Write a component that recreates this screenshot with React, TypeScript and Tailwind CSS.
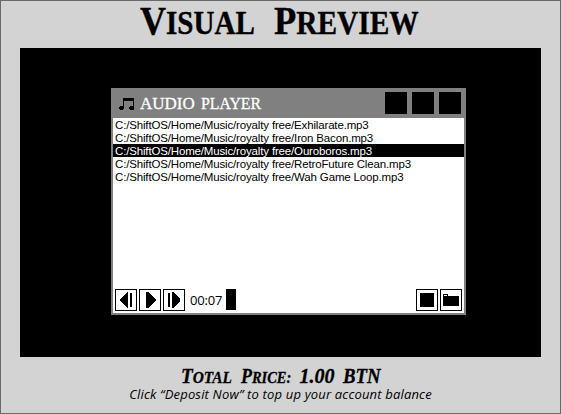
import React from "react";

const TRACKS = ["Exhilarate", "Iron Bacon", "Ouroboros", "RetroFuture Clean", "Wah Game Loop"];

function IconButton({ children }: { children: React.ReactNode }) {
  return (
    <button className="h-[22px] w-[22px] shrink-0 border border-black bg-white">
      <svg viewBox="0 0 20 20" className="block h-5 w-5" shapeRendering="crispEdges">
        {children}
      </svg>
    </button>
  );
}

export default function App() {
  return (
    <main className="flex h-[414px] w-[561px] flex-col items-center border border-[#696969] bg-[#d3d3d3] text-black">
      <h1 className="mr-1 flex h-[47px] w-[278px] shrink-0 items-baseline justify-between whitespace-nowrap font-['Liberation_Serif',serif] text-[33px] leading-[38px] font-bold [-webkit-text-stroke:0.4px_black]">
        <span className="w-[114px] origin-left scale-x-[0.88]"><span className="text-[41px]">V</span>ISUAL</span>
        <span className="w-[144px] origin-left scale-x-[0.89]"><span className="text-[41px]">P</span>REVIEW</span>
      </h1>
      <section className="flex h-[309px] w-[521px] shrink-0 bg-black pt-10 pl-[91px]">
        <div className="flex h-[227px] w-[355px] flex-col border-x-2 border-b-2 border-[#808080] bg-white">
          <header className="flex h-[30px] shrink-0 bg-[#808080] pt-1 pr-[3px] pl-1.5">
            <svg viewBox="0 0 16 14" className="mt-[5px] h-[14px] w-4" shapeRendering="crispEdges">
              <path d="M4 1h11v12h-4v-1h-1v-2h1V9h3V4H5v8H4v1H1v-1H0v-2h1V9h3z" />
            </svg>
            <div className="ml-[5px] flex gap-[6px] font-['Liberation_Serif',serif] text-[17px] leading-[23px] whitespace-nowrap text-white [-webkit-text-stroke:0.3px_white]">
              <span className="w-[55px]">AUDIO</span>
              <span className="w-[60px] origin-left scale-x-[0.93]">PLAYER</span>
            </div>
            <div className="ml-auto flex gap-[5px]">
              <span className="size-[22px] bg-black" />
              <span className="size-[22px] bg-black" />
              <span className="size-[22px] bg-black" />
            </div>
          </header>
          <ul className="flex-1 font-['Liberation_Sans',sans-serif] text-[11.5px] leading-[14px] tracking-[-0.16px] whitespace-nowrap">
            {TRACKS.map((track) => (
              <li key={track} className={track === "Ouroboros" ? "h-[13px] bg-black pl-0.5 text-white" : "h-[13px] pl-0.5"}>
                C:/ShiftOS/Home/Music/royalty free/{track}.mp3
              </li>
            ))}
          </ul>
          <footer className="flex h-6 shrink-0 gap-0.5 px-0.5">
            <IconButton><path d="M12 2v16h-1L4 11V9l7-7zM14 3h2v14h-2z" /></IconButton>
            <IconButton><path d="M6 2h2l8 7v2l-8 7H6z" /></IconButton>
            <IconButton><path d="M4 3h2v14H4zM8 2h1l7 7v2l-7 7H8z" /></IconButton>
            <span className="ml-[3px] w-[34px] font-['Open_Sans',sans-serif] text-[13px] leading-[22px] tracking-[-0.2px]">00:07</span>
            <span className="h-[21px] w-2.5 bg-black" />
            <div className="ml-auto flex gap-0.5">
              <IconButton><path d="M3 3h14v14H3z" /></IconButton>
              <IconButton><path d="M2 4h5v2h11v10H2z" /><path d="M3 5h3v1H3z" fill="#fff" /></IconButton>
            </div>
          </footer>
        </div>
      </section>
      <p className="mt-[5px] flex h-[24px] w-[200px] shrink-0 items-baseline justify-between font-['Liberation_Serif',serif] text-base leading-5 font-bold whitespace-nowrap italic [-webkit-text-stroke:0.3px_black]">
        <span className="w-[50px] origin-left scale-x-[0.96]"><span className="text-xl">T</span>OTAL</span>
        <span className="w-[49px] origin-left scale-x-[0.9]"><span className="text-xl">P</span>RICE:</span>
        <span className="w-[33px] text-xl">1.00</span>
        <span className="w-[38px] origin-left scale-x-[0.94] text-xl">BTN</span>
      </p>
      <p className="shrink-0 font-['Open_Sans',sans-serif] text-[13px] leading-[16px] tracking-[0.17px] whitespace-nowrap italic">Click “Deposit Now” to top up your account balance</p>
    </main>
  );
}
